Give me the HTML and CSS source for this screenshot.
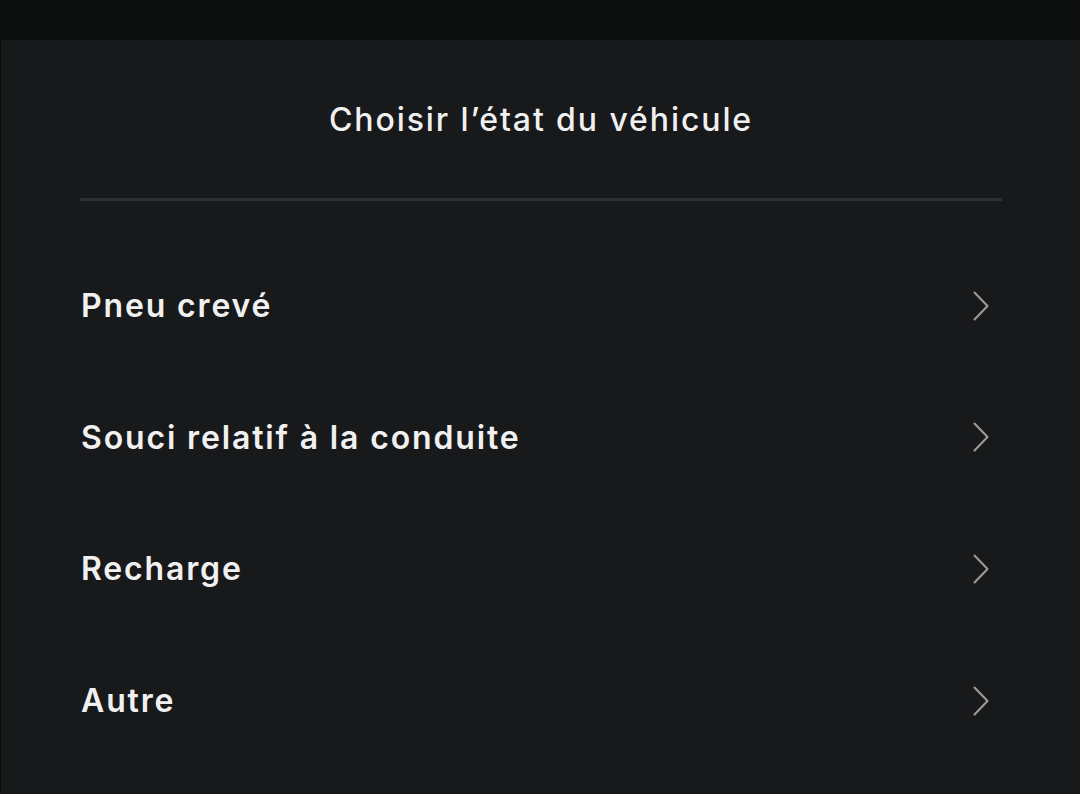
FILE: index.html
```html
<!DOCTYPE html>
<html lang="fr">
<head>
  <meta charset="UTF-8">
  <meta name="viewport" content="width=device-width, initial-scale=1.0">
  <title>État du véhicule</title>
  <link rel="stylesheet" href="styles.css">
</head>
<body>
  <div class="top-bar"></div>
  <div class="panel">
    <header class="panel-header">
      <h1>Choisir l’état du véhicule</h1>
    </header>
    <ul class="options">
      <li class="option">
        <span>Pneu crevé</span>
        <svg class="chevron" viewBox="0 0 16 30"><path d="M1.5 1.5 L14.5 15 L1.5 28.5"/></svg>
      </li>
      <li class="option">
        <span>Souci relatif à la conduite</span>
        <svg class="chevron" viewBox="0 0 16 30"><path d="M1.5 1.5 L14.5 15 L1.5 28.5"/></svg>
      </li>
      <li class="option">
        <span>Recharge</span>
        <svg class="chevron" viewBox="0 0 16 30"><path d="M1.5 1.5 L14.5 15 L1.5 28.5"/></svg>
      </li>
      <li class="option">
        <span>Autre</span>
        <svg class="chevron" viewBox="0 0 16 30"><path d="M1.5 1.5 L14.5 15 L1.5 28.5"/></svg>
      </li>
    </ul>
  </div>
</body>
</html>
```

FILE: styles.css
```css
/* Reset */
* {
  margin: 0;
  padding: 0;
  box-sizing: border-box;
}

body {
  font-family: 'Inter', 'Noto Sans', sans-serif;
  background-color: #0c0d0d;
  color: #eeeeee;
  height: 100vh;
  overflow: hidden;
}

/* Top strip */
.top-bar {
  height: 40px;
  background-color: #0c0d0d;
}

/* Panel */
.panel {
  margin-left: 1px;
  height: 754px;
  background-color: #18191b;
  padding: 0 78px 0 79px;
}

.panel-header {
  height: 161px;
  display: flex;
  justify-content: center;
  align-items: center;
  border-bottom: 3px solid #2e2f31;
}

.panel-header h1 {
  font-size: 32px;
  font-weight: 500;
  letter-spacing: 1.9px;
  color: #f0f0f0;
  padding-top: 1px;
}

/* Options list */
.options {
  list-style: none;
  padding-top: 39px;
}

.option {
  height: 131.6px;
  display: flex;
  justify-content: space-between;
  align-items: center;
  font-size: 32px;
  font-weight: 600;
  letter-spacing: 1.85px;
  color: #f0f0f0;
  padding-left: 1px;
  cursor: pointer;
}

.chevron {
  width: 16px;
  height: 30px;
  margin-right: 13px;
  fill: none;
  stroke: #9a9a9a;
  stroke-width: 2.1;
  stroke-linecap: round;
  stroke-linejoin: round;
}
```
